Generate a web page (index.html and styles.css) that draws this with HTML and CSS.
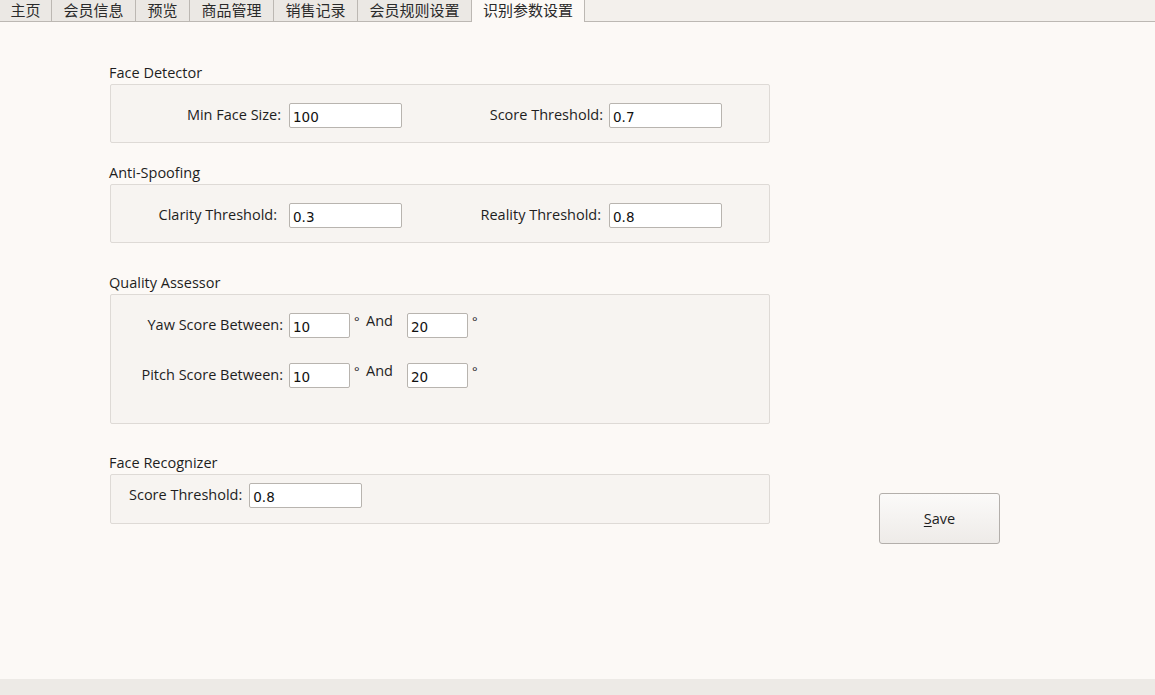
FILE: index.html
```html
<!DOCTYPE html>
<html>
<head>
<meta charset="utf-8">
<link rel="stylesheet" href="styles.css">
</head>
<body>
<div class="window">
  <div class="tabbar">
    <div class="tab first">主页</div>
    <div class="tab">会员信息</div>
    <div class="tab">预览</div>
    <div class="tab">商品管理</div>
    <div class="tab">销售记录</div>
    <div class="tab">会员规则设置</div>
    <div class="tab active">识别参数设置</div>
  </div>
  <div class="content">
    <div class="groups">
      <section class="group g-detector">
        <div class="gtitle">Face Detector</div>
        <div class="gbox">
          <div class="row">
            <label class="lbl l1">Min Face Size:</label>
            <div class="input w113">100</div>
            <label class="lbl l2">Score Threshold:</label>
            <div class="input w113">0.7</div>
          </div>
        </div>
      </section>
      <section class="group g-spoof">
        <div class="gtitle">Anti-Spoofing</div>
        <div class="gbox">
          <div class="row">
            <label class="lbl l1b">Clarity Threshold:</label>
            <div class="input w113">0.3</div>
            <label class="lbl l2b">Reality Threshold:</label>
            <div class="input w113">0.8</div>
          </div>
        </div>
      </section>
      <section class="group g-quality">
        <div class="gtitle">Quality Assessor</div>
        <div class="gbox">
          <div class="row">
            <label class="lbl lq">Yaw Score Between:</label>
            <div class="input w61">10</div>
            <span class="deg">°</span>
            <span class="and">And</span>
            <div class="input w61">20</div>
            <span class="deg">°</span>
          </div>
          <div class="row">
            <label class="lbl lq">Pitch Score Between:</label>
            <div class="input w61">10</div>
            <span class="deg">°</span>
            <span class="and">And</span>
            <div class="input w61">20</div>
            <span class="deg">°</span>
          </div>
        </div>
      </section>
      <section class="group g-recog">
        <div class="gtitle">Face Recognizer</div>
        <div class="gbox">
          <div class="row">
            <label class="lbl lr">Score Threshold:</label>
            <div class="input w113">0.8</div>
          </div>
        </div>
      </section>
    </div>
    <div class="actions">
      <button class="btn"><u>S</u>ave</button>
    </div>
  </div>
  <div class="statusbar"></div>
</div>
</body>
</html>
```
FILE: styles.css
```css
* { box-sizing: border-box; }
html, body { margin: 0; padding: 0; }
body {
  background: #fcf9f6;
  font-family: "Open Sans", "Noto Sans", "Noto Sans CJK SC", sans-serif;
  font-size: 14.5px;
  color: #1e1e1e;
}
.window {
  width: 1155px;
  height: 695px;
  display: flex;
  flex-direction: column;
}
.tabbar {
  display: flex;
  height: 22px;
  border-bottom: 1px solid #bcb8b3;
  background: #f3f0ec;
}
.tab {
  font-family: "Noto Sans CJK SC", sans-serif;
  font-size: 15px;
  line-height: 20px;
  padding: 0 11.5px;
  background: #ebe8e4;
  border-right: 1px solid #bcb8b3;
  color: #2a2a2a;
  height: 21px;
}
.tab.first { padding-left: 10.5px; padding-right: 10.5px; }
.tab.active {
  background: #fcf9f6;
  height: 22px;
  margin-bottom: -1px;
  padding: 0 11px;
}
.content {
  flex: 1;
  display: flex;
  padding-left: 110px;
}
.groups {
  width: 660px;
  display: flex;
  flex-direction: column;
}
.group { display: flex; flex-direction: column; }
.gtitle {
  line-height: 20px;
  height: 20px;
  margin-left: -1px;
  margin-bottom: 1px;
}
.gbox {
  background: #f7f4f1;
  border: 1px solid #dedad6;
  border-radius: 2px;
}
.g-detector { margin-top: 41px; }
.g-detector .gbox { height: 59px; padding-top: 18px; }
.g-spoof { margin-top: 20px; }
.g-spoof .gbox { height: 59px; padding-top: 18px; }
.g-quality { margin-top: 30px; }
.g-quality .gbox { height: 130px; padding-top: 18px; }
.g-quality .row + .row { margin-top: 25px; }
.g-recog { margin-top: 29px; }
.g-recog .gbox { height: 50px; padding-top: 8px; }

.row {
  display: flex;
  align-items: center;
  height: 25px;
}
.lbl {
  text-align: right;
  padding-right: 6px;
  white-space: nowrap;
  margin-top: -3px;
}
.l1 { width: 178px; padding-right: 8px; }
.l2 { width: 207px; padding-right: 6px; }
.l1b { width: 178px; padding-right: 12px; }
.l2b { width: 207px; padding-right: 8px; }
.lq { width: 178px; }
.lr { padding-left: 18px; padding-right: 7px; text-align: left; }

.input {
  height: 25px;
  background: #ffffff;
  border: 1px solid #b8b4af;
  border-radius: 2px;
  font-family: "DejaVu Sans", sans-serif;
  font-size: 13.5px;
  color: #111;
  padding: 5px 0 0 3px;
  line-height: 17px;
}
.w113 { width: 113px; }
.w61 { width: 61px; }
.deg {
  align-self: flex-start;
  margin-top: -1px;
  width: 16px;
  padding-left: 4px;
  font-size: 13px;
}
.and {
  align-self: flex-start;
  margin-top: -2px;
  width: 41px;
}
.actions {
  padding-top: 471px;
  padding-left: 109px;
}
.btn {
  width: 121px;
  height: 51px;
  background: linear-gradient(#fbfaf9, #eeebe8);
  border: 1px solid #b3afab;
  border-radius: 3px;
  font-family: "Open Sans", "Noto Sans", sans-serif;
  font-size: 14.5px;
  color: #1e1e1e;
  padding: 0;
}
.btn u { text-decoration-thickness: 1px; text-underline-offset: 2px; }
.statusbar {
  height: 16px;
  background: #edeae6;
}
```
